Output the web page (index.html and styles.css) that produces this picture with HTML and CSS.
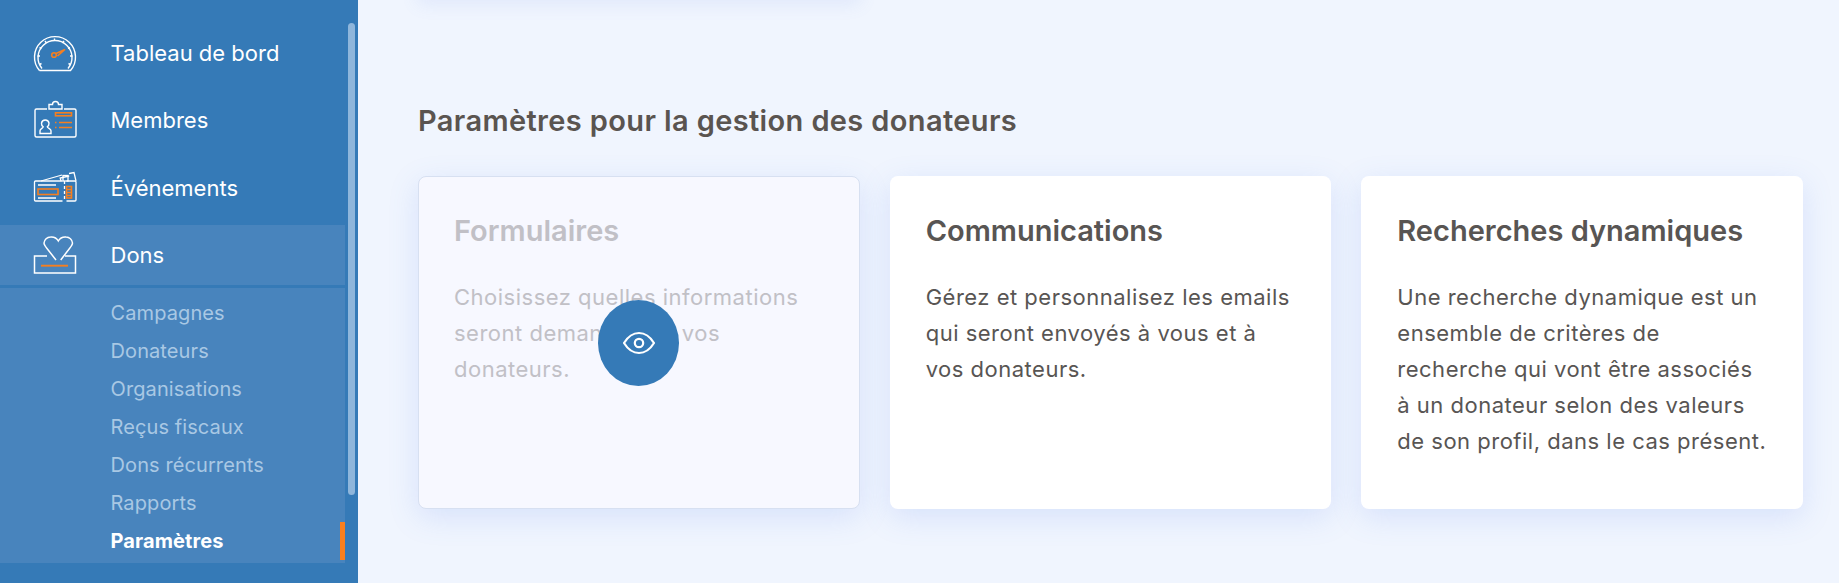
FILE: index.html
```html
<!DOCTYPE html>
<html lang="fr">
<head>
<meta charset="utf-8">
<title>Paramètres pour la gestion des donateurs</title>
<link rel="stylesheet" href="styles.css">
</head>
<body>
<div class="app">
  <aside class="sidebar">
    <nav class="nav">
      <a class="nav-row">
        <svg class="nav-icon" viewBox="0 0 44 44" fill="none" stroke="#fff" stroke-width="1.400">
          <path d="M6.500 39.500A20.500 20.500 0 1 1 37.500 39.500H6.500"/>
          <path d="M9 37.500A17 17 0 1 1 35 37.500"/>
          <path d="M6.500 33.500l2-1M4.500 25h2.500M6.500 16.500l2 1M12 10l1.500 2M21.500 7.500v2.500M31 10l-1.500 2M37 16.500l-2 1M39.500 25H37M37.500 33.500l-2-1"/>
          <g stroke="#f57f20" stroke-width="1.600"><circle cx="21" cy="24" r="2.300"/><path d="M23 22.500l9-4-7.500 6.500"/></g>
        </svg>
        <span class="nav-label">Tableau de bord</span>
      </a>
      <a class="nav-row">
        <svg class="nav-icon" viewBox="0 0 44 44" fill="none" stroke="#fff" stroke-width="1.400">
          <path d="M14 11H3.500A1.500 1.500 0 0 0 2 12.500v25A1.500 1.500 0 0 0 3.500 39h38a1.500 1.500 0 0 0 1.500-1.500v-25a1.500 1.500 0 0 0-1.500-1.500H31"/>
          <path d="M16 11V6.500h3.500a3 3 0 0 1 6 0H29V11z"/>
          <path d="M7 35.500v-2.800c0-2 3.200-2.500 3.200-4a4 4 0 0 1-1.700-3.500 3.800 3.800 0 0 1 7.500 0 4 4 0 0 1-1.700 3.500c0 1.500 3.700 2 3.700 4v2.800z"/>
          <g stroke="#f57f20" stroke-width="1.600"><rect x="22.500" y="14.800" width="16" height="3"/><path d="M22 24.500h1.500M26 24.500h13M22 29.500h1.500M26 29.500h13"/></g>
        </svg>
        <span class="nav-label">Membres</span>
      </a>
      <a class="nav-row">
        <svg class="nav-icon" viewBox="0 0 44 44" fill="none" stroke="#fff" stroke-width="1.300">
          <path d="M8 15l21-6M28 15l-.8-3 9-2M36 7.500l5-1 2 8.500"/>
          <rect x="30" y="9.500" width="5" height="5.500"/>
          <path d="M29.500 15H2.500A1 1 0 0 0 1.500 16v18a1 1 0 0 0 1 1h27M33.500 15h8.500a1 1 0 0 1 1 1v18a1 1 0 0 1-1 1h-8.500"/>
          <path d="M31.500 15v20" stroke-dasharray="3 2"/>
          <path d="M5 19h18M5 32h18" stroke-width="1.300"/>
          <g stroke="#f57f20" stroke-width="1.600"><rect x="5" y="23" width="20" height="5.500"/><rect x="33.500" y="20.500" width="5" height="11.500"/><path d="M33.500 23.500h5M33.500 26.500h5M33.500 29.500h5"/></g>
        </svg>
        <span class="nav-label">Événements</span>
      </a>
      <a class="nav-row nav-row-active">
        <svg class="nav-icon" viewBox="0 0 44 44" fill="none" stroke="#fff" stroke-width="1.500">
          <path d="M23 27L14 15.500C12 13 11 11.500 11 10A6.500 6.500 0 0 1 17.500 4 8 8 0 0 1 25.300 8 8 8 0 0 1 33 4 6.500 6.500 0 0 1 39.500 10C39.500 11.500 38.500 13 36.500 15.500L27.700 27"/>
          <path d="M14 23H1.500v17h41V23H32"/>
          <path d="M8 32.700h27" stroke="#f57f20" stroke-width="1.900"/>
        </svg>
        <span class="nav-label">Dons</span>
      </a>
    </nav>
    <ul class="subnav">
      <li class="sub-row">Campagnes</li>
      <li class="sub-row">Donateurs</li>
      <li class="sub-row">Organisations</li>
      <li class="sub-row">Reçus fiscaux</li>
      <li class="sub-row">Dons récurrents</li>
      <li class="sub-row">Rapports</li>
      <li class="sub-row sub-row-active">Paramètres</li>
    </ul>
    <div class="scrollbar"></div>
  </aside>
  <main class="main">
    <div class="previous-card"></div>
    <h2 class="section-title">Paramètres pour la gestion des donateurs</h2>
    <div class="cards">
      <article class="card card-hover">
        <h3 class="card-title">Formulaires</h3>
        <p class="card-text">Choisissez quelles informations<br>seront demandées à vos<br>donateurs.</p>
        <button class="view-button" type="button" aria-label="Voir">
          <svg class="eye" viewBox="0 0 32 24" fill="none" stroke="#fff" stroke-width="2.200">
            <path d="M1 12C5 5.500 10 2 16 2s11 3.500 15 10c-4 6.500-9 10-15 10S5 18.500 1 12z"/>
            <circle cx="16" cy="12" r="4.200"/>
          </svg>
        </button>
      </article>
      <article class="card">
        <h3 class="card-title">Communications</h3>
        <p class="card-text">Gérez et personnalisez les emails<br>qui seront envoyés à vous et à<br>vos donateurs.</p>
      </article>
      <article class="card">
        <h3 class="card-title">Recherches dynamiques</h3>
        <p class="card-text">Une recherche dynamique est un<br>ensemble de critères de<br>recherche qui vont être associés<br>à un donateur selon des valeurs<br>de son profil, dans le cas présent.</p>
      </article>
    </div>
  </main>
</div>
</body>
</html>
```
FILE: styles.css
```css
* { box-sizing: border-box; }
html, body { margin: 0; height: 100%; }
body {
  font-family: "Inter", "Open Sans", sans-serif;
  background: #f0f5fe;
  overflow: hidden;
}
.app { display: flex; height: 583px; }
.sidebar {
  position: relative;
  flex: 0 0 358px;
  background: #357ab7;
  padding-top: 23px;
}
.nav { display: flex; flex-direction: column; gap: 7.33px; width: 345px; }
.nav-row {
  display: flex;
  align-items: center;
  height: 60px;
  padding-left: 33px;
  gap: 33.500px;
  color: #fff;
}
.nav-row-active { background: #4884bd; }
.nav-icon { flex: 0 0 44px; width: 44px; height: 44px; }
.nav-label { font-size: 22px; }
.subnav {
  list-style: none;
  margin: 3px 0 0;
  padding: 6.500px 0 2.500px;
  width: 345px;
  background: #4884bd;
}
.sub-row {
  display: flex;
  align-items: center;
  height: 38px;
  padding-left: 110.500px;
  font-size: 20px;
  letter-spacing: 0.1px;
  color: #a9c8e4;
}
.sub-row-active {
  color: #fff;
  font-weight: 700;
  border-right: 5px solid #f97f1e;
}
.scrollbar {
  position: absolute;
  top: 23px;
  left: 348px;
  width: 7px;
  height: 472px;
  border-radius: 4px;
  background: #8fb6db;
}
.main {
  position: relative;
  flex: 1;
  padding: 0 36px 0 60px;
  overflow: hidden;
}
.previous-card {
  position: absolute;
  top: -40px;
  left: 60px;
  width: 442px;
  height: 40px;
  box-shadow: 0 4px 18px rgba(110, 140, 230, 0.12);
}
.section-title {
  margin: 104px 0 0;
  height: 34px;
  line-height: 34px;
  font-size: 29px;
  font-weight: 600;
  letter-spacing: 0.37px;
  color: #5a5450;
}
.cards { display: flex; gap: 30px; margin-top: 38px; }
.card {
  position: relative;
  flex: 0 0 441.670px;
  height: 332.500px;
  padding: 36px;
  background: #fff;
  border-radius: 8px;
  box-shadow: 0 8px 30px rgba(90, 130, 235, 0.17);
  color: #585553;
}
.card-title {
  margin: 1px 0 0;
  height: 36px;
  line-height: 36px;
  font-size: 29px;
  font-weight: 600;
}
.card-text {
  margin: 30px 0 0;
  font-size: 22px;
  letter-spacing: 0.5px;
  line-height: 36.100px;
  white-space: nowrap;
}
.card-hover {
  background: #f7f8ff;
  border: 1px solid #d7e0f1;
  padding: 35px;
  color: #c1c0c6;
}
.view-button {
  position: absolute;
  left: 179px;
  top: 123px;
  width: 81px;
  height: 86px;
  padding: 0;
  border: 0;
  border-radius: 50%;
  background: #357ab7;
  display: flex;
  align-items: center;
  justify-content: center;
}
.eye { width: 32px; height: 24px; }
```
